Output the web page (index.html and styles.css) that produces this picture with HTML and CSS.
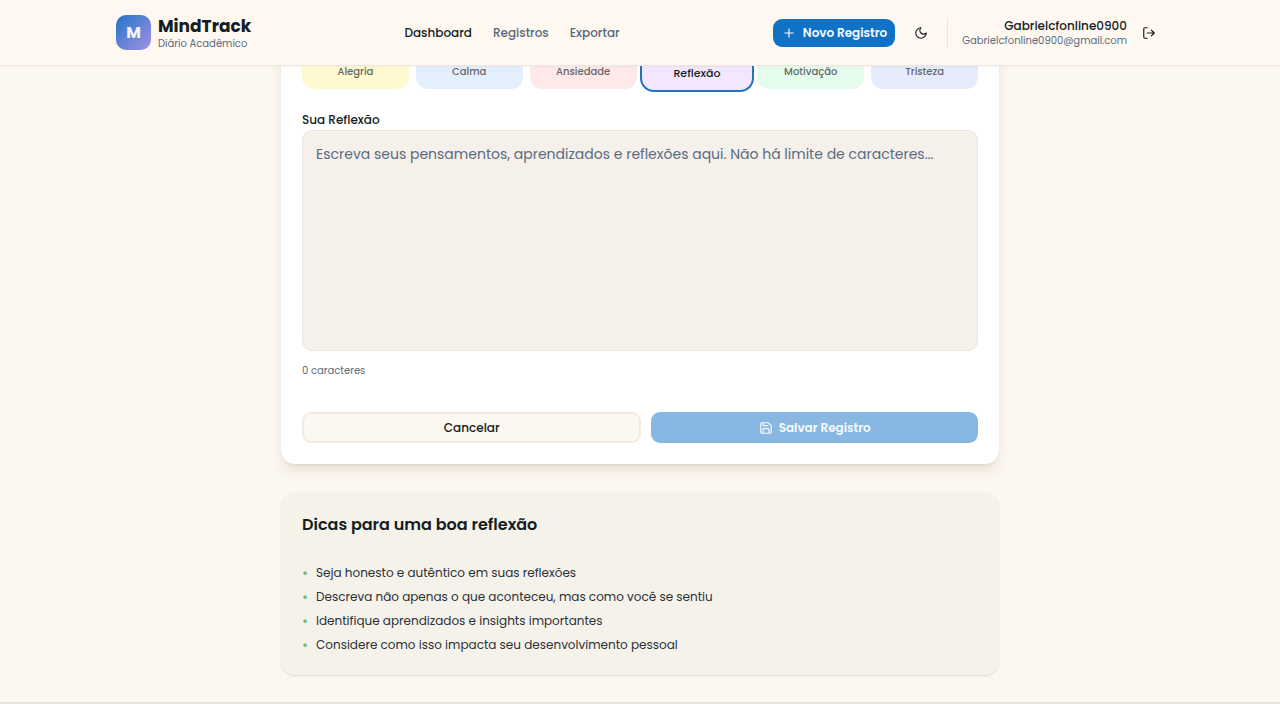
FILE: index.html
```html
<!DOCTYPE html>
<html lang="pt-BR">
<head>
<meta charset="utf-8">
<meta name="viewport" content="width=device-width, initial-scale=1">
<title>MindTrack – Novo Registro</title>
<link rel="stylesheet" href="styles.css">
</head>
<body>
<header class="topbar">
  <div class="topbar-inner">
    <a class="brand" href="#">
      <span class="brand-mark">M</span>
      <span class="brand-text"><span class="brand-name">MindTrack</span><span class="brand-sub">Diário Acadêmico</span></span>
    </a>
    <nav class="nav">
      <a class="nav-link active" href="#">Dashboard</a>
      <a class="nav-link" href="#">Registros</a>
      <a class="nav-link" href="#">Exportar</a>
    </nav>
    <div class="actions">
      <button class="btn-new" type="button">
        <svg class="icon" viewBox="0 0 24 24" aria-hidden="true"><path d="M5 12h14M12 5v14"/></svg>
        Novo Registro
      </button>
      <button class="btn-icon btn-theme" type="button" aria-label="Alternar tema">
        <svg class="icon" viewBox="0 0 24 24" aria-hidden="true"><path d="M12 3a6 6 0 0 0 9 9 9 9 0 1 1-9-9Z"/></svg>
      </button>
      <div class="user">
        <span class="user-name">Gabrielcfonline0900</span>
        <span class="user-mail">Gabrielcfonline0900@gmail.com</span>
      </div>
      <button class="btn-icon" type="button" aria-label="Sair">
        <svg class="icon" viewBox="0 0 24 24" aria-hidden="true"><path d="M9 21H5a2 2 0 0 1-2-2V5a2 2 0 0 1 2-2h4M16 17l5-5-5-5M21 12H9"/></svg>
      </button>
    </div>
  </div>
</header>
<main class="page">
  <form class="card">
    <div class="moods">
      <button class="mood yellow" type="button">Alegria</button>
      <button class="mood blue" type="button">Calma</button>
      <button class="mood red" type="button">Ansiedade</button>
      <button class="mood purple selected" type="button" aria-pressed="true">Reflexão</button>
      <button class="mood green" type="button">Motivação</button>
      <button class="mood indigo" type="button">Tristeza</button>
    </div>
    <label class="label" for="reflexao">Sua Reflexão</label>
    <textarea class="text" id="reflexao" placeholder="Escreva seus pensamentos, aprendizados e reflexões aqui. Não há limite de caracteres..."></textarea>
    <p class="counter">0 caracteres</p>
    <div class="form-actions">
      <button class="btn btn-cancel" type="button">Cancelar</button>
      <button class="btn btn-save" type="submit" disabled>
        <svg class="icon" viewBox="0 0 24 24" aria-hidden="true"><path d="M15.200 3a2 2 0 0 1 1.400.600l3.800 3.800a2 2 0 0 1 .600 1.400V19a2 2 0 0 1-2 2H5a2 2 0 0 1-2-2V5a2 2 0 0 1 2-2zM17 21v-7a1 1 0 0 0-1-1H8a1 1 0 0 0-1 1v7M7 3v4a1 1 0 0 0 1 1h7"/></svg>
        Salvar Registro
      </button>
    </div>
  </form>
  <section class="tips">
    <h2 class="tips-title">Dicas para uma boa reflexão</h2>
    <ul class="tips-list">
      <li>Seja honesto e autêntico em suas reflexões</li>
      <li>Descreva não apenas o que aconteceu, mas como você se sentiu</li>
      <li>Identifique aprendizados e insights importantes</li>
      <li>Considere como isso impacta seu desenvolvimento pessoal</li>
    </ul>
  </section>
</main>
<footer class="footer"></footer>
</body>
</html>
```
FILE: styles.css
```css
* { box-sizing: border-box; }
body {
  margin: 0;
  background: #fcf7f0;
  color: #151c23;
  font-family: Poppins, Inter, "Open Sans", sans-serif;
  font-size: 12px;
  line-height: 18px;
}
button, textarea { font: inherit; color: inherit; }
button { cursor: pointer; }
a { color: inherit; text-decoration: none; }
.icon {
  width: 14px;
  height: 14px;
  flex: none;
  fill: none;
  stroke: currentColor;
  stroke-width: 2;
  stroke-linecap: round;
  stroke-linejoin: round;
}

.topbar {
  position: sticky;
  top: 0;
  z-index: 10;
  background: #fef8f1;
  border-bottom: 1px solid #efe8e1;
  box-shadow: 0 1px 2px rgba(0, 0, 0, .04);
}
.topbar-inner {
  max-width: 1048px;
  min-height: 65px;
  margin: 0 auto;
  display: flex;
  align-items: center;
  justify-content: space-between;
}
.brand { display: flex; align-items: center; gap: 7px; }
.brand-mark {
  width: 35px;
  height: 35px;
  display: grid;
  place-items: center;
  border-radius: 10px;
  background: linear-gradient(135deg, #1f74c7, #a592e4);
  color: #f5f3fa;
  font-size: 16px;
  font-weight: 700;
}
.brand-text { display: flex; flex-direction: column; }
.brand-name { font-size: 17px; font-weight: 700; line-height: 22px; }
.brand-sub { font-size: 10px; line-height: 14px; color: #5b6b80; }
.nav { display: flex; gap: 21px; font-weight: 500; color: #56697f; }
.nav-link.active { color: #151c23; }
.actions { display: flex; align-items: center; }
.btn-new {
  height: 28px;
  padding: 0 8px 0 9px;
  display: flex;
  align-items: center;
  gap: 7px;
  border: 0;
  border-radius: 9px;
  background: #0f72c6;
  color: #f7fafd;
  font-weight: 600;
}
.btn-icon {
  width: 30px;
  height: 30px;
  display: grid;
  place-items: center;
  padding: 0;
  border: 0;
  background: none;
}
.btn-theme { margin: 0 11px; }
.user {
  display: flex;
  flex-direction: column;
  align-items: flex-end;
  padding-left: 14px;
  margin-right: 7px;
  border-left: 1px solid #ece6df;
}
.user-name { font-weight: 500; line-height: 16px; }
.user-mail { font-size: 10px; line-height: 14px; color: #5b6b80; }

.page {
  max-width: 718px;
  margin: -48px auto 0;
  display: flex;
  flex-direction: column;
  gap: 28px;
  padding-bottom: 27px;
}
.card {
  padding: 21px;
  background: #fff;
  border-radius: 14px;
  box-shadow: 0 8px 13px -2px rgba(90, 60, 30, .12), 0 3px 5px -3px rgba(90, 60, 30, .14);
}
.moods { display: grid; grid-template-columns: repeat(6, 1fr); gap: 7px; }
.mood {
  height: 50px;
  padding: 0 0 8px;
  display: flex;
  align-items: flex-end;
  justify-content: center;
  border: 0;
  border-radius: 12px;
  font-size: 10px;
  font-weight: 500;
  color: #646669;
}
.yellow { background: #fef9cf; }
.blue { background: #e4effe; }
.red { background: #fee8e8; }
.purple { background: #f2e7fe; }
.green { background: #e4fcec; }
.indigo { background: #e7ecfd; }
.mood.selected {
  height: 53px;
  margin: 0 -4px -3px;
  border: 2px solid #1f73c2;
  border-radius: 14px;
  font-size: 11px;
  color: #151c23;
}
.label { display: block; margin-top: 22px; font-weight: 500; }
.text {
  display: block;
  width: 100%;
  height: 221px;
  margin-top: 1px;
  padding: 13px;
  resize: none;
  border: 1px solid #ece5db;
  border-radius: 10px;
  background: #f5f0ea;
  font-size: 14px;
  line-height: 21px;
}
.text::placeholder { color: #5b6b80; opacity: 1; }
.counter { margin: 11px 0 0; font-size: 10px; color: #5b6b80; }
.form-actions { display: flex; gap: 10px; margin-top: 32px; }
.btn {
  height: 31px;
  flex: 1 1 0;
  display: flex;
  align-items: center;
  justify-content: center;
  gap: 6px;
  padding: 0;
  border: 0;
  border-radius: 9px;
  font-weight: 500;
}
.btn-cancel { flex-grow: 1.027; border: 2px solid #f2ebe4; background: #fcf7f0; }
.btn-save { background: #88b8e2; color: #f6fafd; font-weight: 600; cursor: default; }

.tips {
  padding: 21px;
  background: #f5f2ea;
  border-radius: 14px;
  box-shadow: 0 1px 2px rgba(60, 40, 20, .14);
}
.tips-title { margin: 0; font-size: 16px; font-weight: 600; line-height: 24px; }
.tips-list {
  margin: 27px 0 0;
  padding: 0;
  display: grid;
  gap: 6px;
  list-style: none;
  color: #2b3138;
}
.tips-list li { display: flex; gap: 8px; }
.tips-list li::before { content: "•"; color: #7fb77c; font-weight: 700; }
.footer { height: 2px; background: #e7e3e0; }
```
